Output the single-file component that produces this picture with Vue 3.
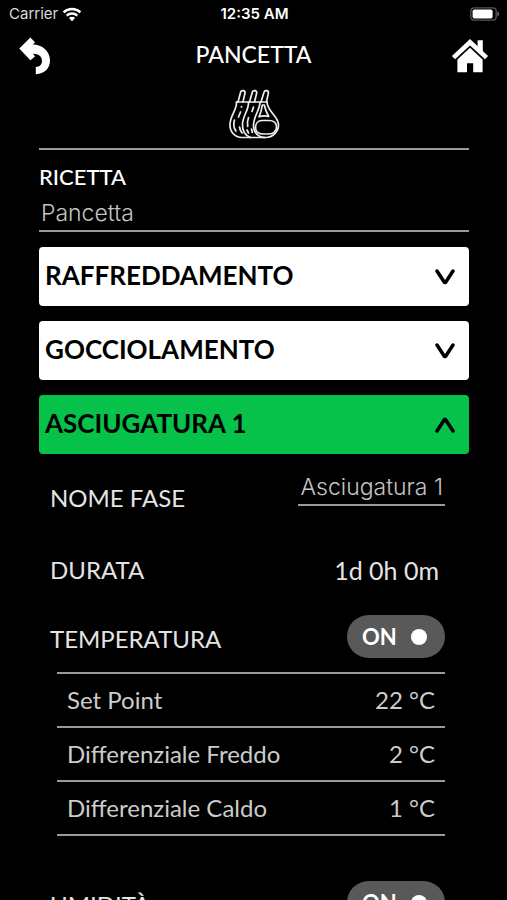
<script setup>
import { ref, reactive } from 'vue'

const recipe = ref('Pancetta')
const phaseName = ref('Asciugatura 1')
const openPhase = ref('ASCIUGATURA 1')
const phases = ['RAFFREDDAMENTO', 'GOCCIOLAMENTO', 'ASCIUGATURA 1']
const active = reactive({ temperature: true, humidity: true })
const settings = [
  { name: 'Set Point', value: '22 °C' },
  { name: 'Differenziale Freddo', value: '2 °C' },
  { name: 'Differenziale Caldo', value: '1 °C' }
]

function toggle(name) {
  openPhase.value = openPhase.value === name ? '' : name
}
</script>

<template>
  <div class="screen">
    <div class="status">
      <div class="carrier">
        <span>Carrier</span>
        <svg width="20" height="15" viewBox="0 0 20 15" aria-hidden="true">
          <g fill="none" stroke="#fff" stroke-width="2.4">
            <path d="M1.6 5.4a12 12 0 0 1 16.8 0" />
            <path d="M4.7 8.6a7.6 7.6 0 0 1 10.6 0" />
          </g>
          <path d="M10 14.2 6.9 11a4.4 4.4 0 0 1 6.2 0z" fill="#fff" />
        </svg>
      </div>
      <span class="time">12:35 AM</span>
      <svg class="battery" width="30" height="14" viewBox="0 0 30 14" aria-hidden="true">
        <rect x="0.8" y="0.8" width="25.4" height="12.4" rx="3.4" fill="none" stroke="#555" stroke-width="1.3" />
        <rect x="2.6" y="2.4" width="20" height="9.2" rx="1.8" fill="#fff" />
        <path d="M27.4 4.6c2.4.6 2.4 4.2 0 4.8z" fill="#666" />
      </svg>
    </div>

    <header class="bar">
      <button class="icon-button" type="button" aria-label="Indietro">
        <svg width="32" height="38" viewBox="0 0 32 38">
          <path d="M1.200 11.400 12.400.4l4.600 4.800-2 2.400C24 7.600 32 14 32 23.600c0 8-6 13.800-14.200 13.600v-7.200c4-.2 6.200-2.600 6.200-6 0-4.400-3.400-7.400-9-7.200l2 2.600L12.400 23.200z" fill="#fff" />
        </svg>
      </button>
      <h1 class="title">PANCETTA</h1>
      <a class="icon-button home" href="#" aria-label="Home">
        <svg width="38" height="34" viewBox="0 0 38 34">
          <path d="M2.500 18.600 19 3.200l16.500 15.400" fill="none" stroke="#fff" stroke-width="4.600" />
          <path d="M26.600 1.200h5.200v13l-5.200-5z" fill="#fff" />
          <path d="M19 8.800 31.600 20.600v12.600h-9.400v-9h-6.200v9H6.400V20.600z" fill="#fff" />
        </svg>
      </a>
    </header>

    <main class="content">
      <div class="emblem">
        <svg width="52" height="52" viewBox="0 0 52 52" fill="none" stroke="#eee" stroke-width="1.700" stroke-linecap="round" stroke-linejoin="round" aria-hidden="true">
          <path d="M10 14 12.600 4.200a2.200 2.200 0 0 1 4.300 1.200L15 14" />
          <path d="M21.500 14 24.300 4.200a2.200 2.200 0 0 1 4.300 1.200L26.500 14" />
          <path d="M33 14 36 4.200a2.200 2.200 0 0 1 4.300 1.200L38.500 14" />
          <path d="M8.500 14h30.500" />
          <path d="M8.500 14c.5 8-6 13-6.500 22-.4 8 5 13.500 12 13.500h23" />
          <path d="M20.500 14c.5 8-5.500 13-6 22-.4 7 3 11.500 8 13.500" />
          <path d="M32 14c0 8-6 13-6.500 23-.4 7.500 5 12.500 12 12.500S50.500 44 50.500 37C50.500 28 39.500 24 39 14" />
          <path d="M34.300 17h2c.8 4.400 2.400 8 4.400 11.500-3-.8-6.600-.6-9.700.3 1.800-3.600 2.800-7.400 3.300-11.800z" />
          <path d="M34 32.500h7c4.500 0 7.500 2.500 7.500 6.500s-3 7-7.500 7h-6c-4.500 0-7.500-2.500-7.500-6.500s2.500-7 6.500-7z" />
          <path d="M13.500 18.500v.5M12.500 24l-2 5M6.500 32c-1.200 4-.8 8 1.400 11M11.500 39c.4 2.600 1.200 4.400 2.600 6" />
          <path d="M25.500 19l-1.500 4.500M20.500 29.500c-1.200 3.500-1.400 6-.8 9M19 42l1.500 3M23.500 41l.8 3.500" />
        </svg>
      </div>

      <div class="recipe">
        <label for="recipe">RICETTA</label>
        <input id="recipe" v-model="recipe" class="field" type="text" />
      </div>

      <div class="phases">
        <button
          v-for="name in phases"
          :key="name"
          class="phase"
          :class="{ open: openPhase === name }"
          type="button"
          :aria-expanded="openPhase === name"
          @click="toggle(name)"
        >
          <span class="phase-title">{{ name }}</span>
          <svg class="chevron" width="20" height="16" viewBox="0 0 20 16" aria-hidden="true">
            <path d="M2 2 9.500 13.500h1L18 2" fill="none" stroke="currentColor" stroke-width="3.500" stroke-linecap="round" stroke-linejoin="round" />
          </svg>
        </button>
      </div>

      <section class="details">
        <div class="row name-row">
          <label for="phase-name">NOME FASE</label>
          <input id="phase-name" v-model="phaseName" class="field phase-name" type="text" />
        </div>
        <div class="row duration-row">
          <span>DURATA</span>
          <span class="duration">1d 0h 0m</span>
        </div>
        <div class="row switch-row">
          <span id="temperature" class="switch-title">TEMPERATURA</span>
          <label class="switch">
            <span>{{ active.temperature ? 'ON' : 'OFF' }}</span>
            <input v-model="active.temperature" type="checkbox" aria-labelledby="temperature" />
          </label>
        </div>
        <table class="settings">
          <tbody>
            <tr v-for="item in settings" :key="item.name">
              <th scope="row">{{ item.name }}</th>
              <td>{{ item.value }}</td>
            </tr>
          </tbody>
        </table>
        <div class="row switch-row">
          <span id="humidity" class="switch-title">UMIDITÀ</span>
          <label class="switch">
            <span>{{ active.humidity ? 'ON' : 'OFF' }}</span>
            <input v-model="active.humidity" type="checkbox" aria-labelledby="humidity" />
          </label>
        </div>
      </section>
    </main>
  </div>
</template>

<style>
body {
  background: #000;
}
</style>

<style scoped>
.screen {
  display: flex;
  flex-direction: column;
  height: 100vh;
  overflow: hidden;
  background: #000;
  color: #fff;
  font-family: Lato, "Liberation Sans", sans-serif;
}
.screen * {
  box-sizing: border-box;
}
.status {
  display: grid;
  grid-template-columns: 1fr auto 1fr;
  align-items: center;
  flex: none;
  height: 28px;
  padding: 0 7px 0 9px;
  font: 400 15px/18px Inter, "Liberation Sans", sans-serif;
}
.carrier {
  display: flex;
  align-items: center;
  gap: 4px;
  color: #ddd;
}
.time {
  font-weight: 600;
}
.battery {
  justify-self: end;
}
.bar {
  display: grid;
  grid-template-columns: 1fr auto 1fr;
  align-items: center;
  flex: none;
  height: 56px;
  padding: 0 18px;
}
.icon-button {
  display: block;
  justify-self: start;
  padding: 0;
  border: 0;
  background: none;
}
.icon-button svg {
  display: block;
}
.home {
  justify-self: end;
}
.title {
  margin: 0;
  padding-bottom: 4px;
  font-size: 23px;
  font-weight: 500;
  line-height: 32px;
}
.content {
  flex: 1;
  min-height: 0;
  overflow-y: auto;
  scrollbar-width: none;
  padding: 4px 38px 24px 39px;
}
.emblem {
  display: flex;
  justify-content: center;
  height: 62px;
  border-bottom: 2px solid #999;
}
.recipe {
  display: flex;
  flex-direction: column;
  padding-top: 12px;
  font-size: 22px;
  font-weight: 500;
  line-height: 30px;
}
.field {
  width: 100%;
  height: 40px;
  padding: 4px 2px 0;
  border: 0;
  border-bottom: 2px solid #999;
  border-radius: 0;
  outline: 0;
  background: none;
  color: #c4c4c4;
  font: 300 23px/30px Inter, "Liberation Sans", sans-serif;
}
.phases {
  display: flex;
  flex-direction: column;
  gap: 15px;
  padding-top: 15px;
}
.phase {
  display: flex;
  align-items: center;
  justify-content: space-between;
  height: 59px;
  padding: 0 14px 0 6px;
  border: 0;
  border-radius: 4px;
  background: #fff;
  color: #000;
  font: 700 26px/32px Lato, "Liberation Sans", sans-serif;
}
.phase-title {
  padding-bottom: 4px;
}
.open {
  background: #06c24b;
}
.open .chevron {
  transform: rotate(180deg);
}
.details {
  padding: 12px 24px 0 11px;
}
.row {
  display: flex;
  align-items: center;
  justify-content: space-between;
  color: #e4e4e4;
  font-size: 24px;
  line-height: 32px;
}
.name-row {
  height: 64px;
}
.phase-name {
  width: 147px;
  margin-bottom: 25px;
  text-align: right;
}
.duration-row {
  height: 80px;
  padding-right: 6px;
}
.duration {
  font-size: 25px;
}
.switch-row {
  height: 53px;
}
.switch-title {
  padding-top: 4px;
}
.switch {
  display: flex;
  align-items: center;
  justify-content: space-between;
  width: 98px;
  height: 43px;
  padding: 0 18px 0 15px;
  border-radius: 22px;
  background: #595959;
  color: #fff;
  font-size: 22px;
  font-weight: 700;
}
.switch input {
  width: 16px;
  height: 16px;
  margin: 0;
  appearance: none;
  border-radius: 50%;
  background: #fff;
}
.settings {
  width: calc(100% - 7px);
  margin: 9px 0 40px 7px;
  border-collapse: collapse;
  border-top: 2px solid #999;
  color: #ccc;
  font-size: 24px;
  line-height: 30px;
}
.settings tr {
  height: 54px;
  border-bottom: 2px solid #999;
}
.settings th {
  padding: 0 0 0 10px;
  font-weight: 400;
  text-align: left;
}
.settings td {
  padding: 0 10px 0 0;
  text-align: right;
}
</style>
